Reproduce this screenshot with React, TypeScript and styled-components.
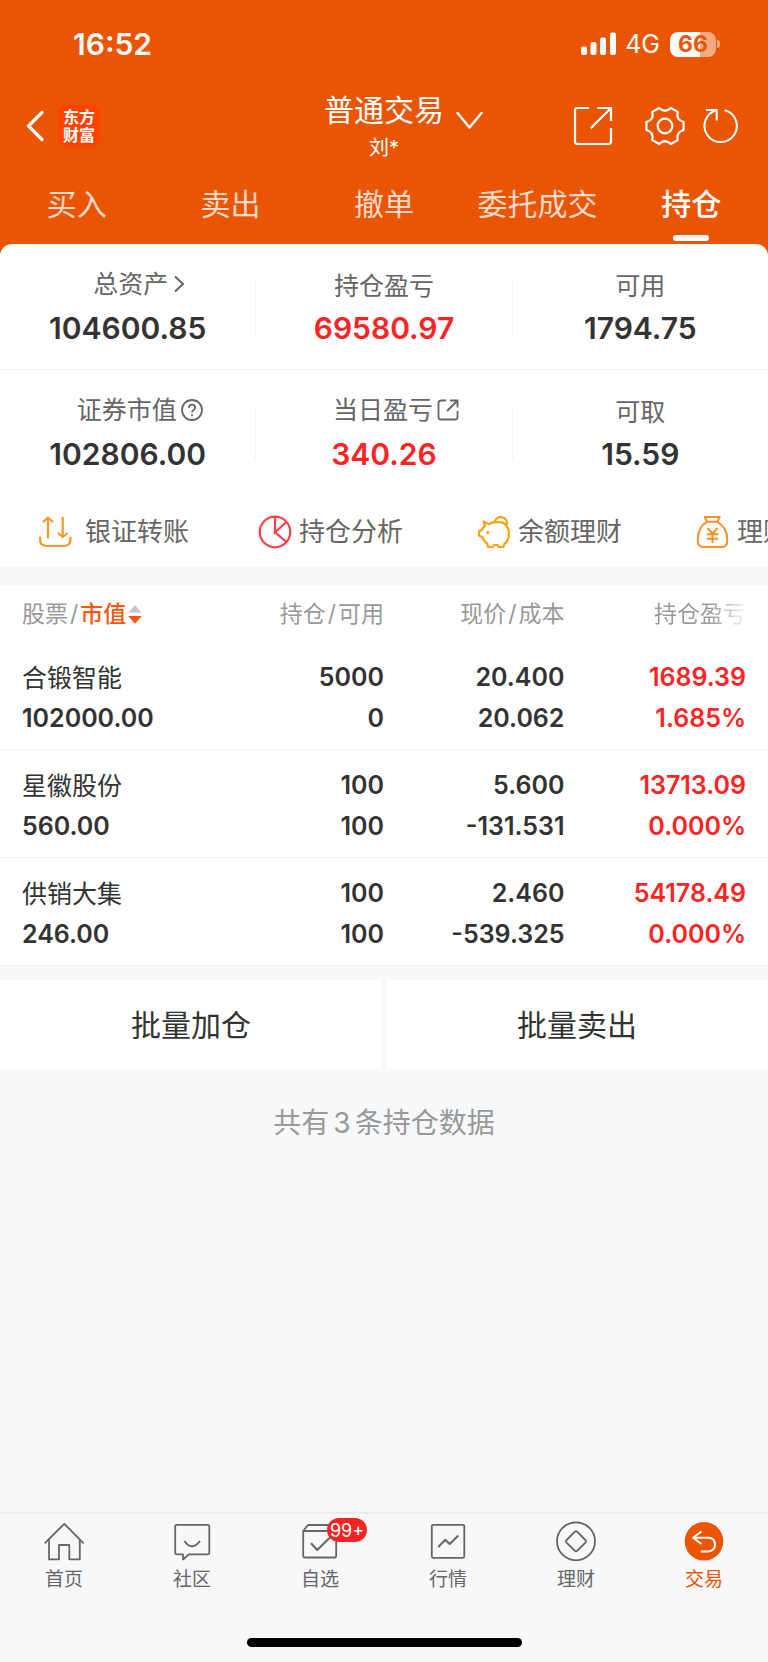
import React from "react";
import styled, { createGlobalStyle } from "styled-components";

const color = {
  brand: "#ea5504",
  accent: "#fb560a",
  page: "#f7f8fa",
  text: "#333333",
  label: "#666666",
  muted: "#999999",
  red: "#fb2424",
  line: "#f4f4f5",
};

const GlobalStyle = createGlobalStyle`
  * { box-sizing: border-box; }
  body {
    margin: 0;
    background: ${color.page};
    color: ${color.text};
    font-family: Inter, "Noto Sans CJK SC", sans-serif;
  }
  button {
    font: inherit;
    color: inherit;
    background: none;
    border: 0;
    padding: 0;
    cursor: pointer;
  }
  a { color: inherit; text-decoration: none; }
  svg { display: block; flex: none; fill: none; }
`;

const Screen = styled.div`
  display: flex;
  flex-direction: column;
  min-height: 100vh;
  background: ${color.page};
`;

/* ---------- header ---------- */

const Header = styled.header`
  background: ${color.brand};
  color: #fff;
`;

const StatusBar = styled.div`
  display: flex;
  justify-content: space-between;
  align-items: center;
  height: 88px;
  padding: 0 48px 0 73px;
`;

const Clock = styled.time`
  font-size: 30px;
  line-height: 36px;
  font-weight: 600;
`;

const StatusIcons = styled.div`
  display: flex;
  align-items: center;
`;

const Network = styled.span`
  margin: 0 10px 0 8px;
  font-size: 25px;
  line-height: 28px;
`;

const Battery = styled.span`
  width: 46px;
  height: 25px;
  border-radius: 8px;
  background: linear-gradient(90deg, #fff 66%, rgba(255, 255, 255, 0.5) 66%);
  color: ${color.brand};
  font-size: 23px;
  line-height: 25px;
  font-weight: 700;
  text-align: center;
`;

const BatteryTip = styled.span`
  width: 3px;
  height: 8px;
  margin-left: 1px;
  border-radius: 0 4px 4px 0;
  background: rgba(255, 255, 255, 0.5);
`;

const NavBar = styled.div`
  display: grid;
  grid-template-columns: 1fr auto 1fr;
  align-items: center;
  height: 73px;
`;

const NavLeft = styled.div`
  display: flex;
  align-items: center;
  gap: 14px;
  padding-left: 26px;
`;

const NavRight = styled.div`
  display: flex;
  align-items: center;
  justify-content: flex-end;
  gap: 18px;
  padding-right: 29px;

  & > :first-child {
    margin-right: 14px;
  }
`;

const Logo = styled.a`
  display: flex;
  flex-direction: column;
  justify-content: center;
  width: 42px;
  height: 42px;
  border-radius: 8px;
  background: #ff4200;
  font-size: 16px;
  line-height: 18px;
  font-weight: 700;
  text-align: center;
`;

const Account = styled.button`
  display: flex;
  flex-direction: column;
  align-items: center;
  gap: 3px;
  padding-top: 3px;
`;

const AccountType = styled.span`
  display: flex;
  align-items: flex-end;
  gap: 12px;
  padding-left: 39px;
  font-size: 30px;
  line-height: 38px;
`;

const AccountName = styled.span`
  font-size: 20px;
  line-height: 32px;
`;

const TradeTabs = styled.nav`
  display: grid;
  grid-template-columns: repeat(5, 1fr);
  height: 83px;
`;

const TradeTab = styled.a<{ $active?: boolean }>`
  display: flex;
  flex-direction: column;
  align-items: center;
  padding-top: 21px;
  font-size: 30px;
  line-height: 44px;
  font-weight: ${(p) => (p.$active ? 500 : 400)};
  color: ${(p) => (p.$active ? "#fff" : "rgba(255, 255, 255, 0.8)")};
  white-space: nowrap;

  &::after {
    content: "";
    width: 36px;
    height: 6px;
    margin-top: 9px;
    border-radius: 3px;
    background: ${(p) => (p.$active ? "#fff" : "transparent")};
  }
`;

/* ---------- account summary ---------- */

const SummaryBackdrop = styled.div`
  background: ${color.brand};
`;

const Summary = styled.section`
  overflow: hidden;
  border-radius: 12px 12px 0 0;
  background: #fff;
`;

const SummaryRow = styled.div<{ $line?: boolean }>`
  display: flex;
  align-items: center;
  height: 126px;
  border-bottom: 1px solid ${(p) => (p.$line ? color.line : "transparent")};
`;

const Divider = styled.i`
  width: 1px;
  height: 54px;
  background: ${color.line};
`;

const Metric = styled.div`
  display: flex;
  flex: 1 1 0;
  flex-direction: column;
  align-items: center;
  padding-top: 8px;
`;

const MetricLabel = styled.span<{ $withIcon?: boolean }>`
  display: flex;
  align-items: center;
  gap: 4px;
  height: 34px;
  padding: ${(p) => (p.$withIcon ? "0 0 4px 24px" : "0")};
  font-size: 25px;
  line-height: 34px;
  color: ${color.label};
`;

const MetricValue = styled.strong<{ $red?: boolean }>`
  font-size: 30px;
  line-height: 50px;
  font-weight: 600;
  color: ${(p) => (p.$red ? color.red : color.text)};
`;

const Shortcuts = styled.div`
  display: flex;
  height: 71px;
  padding-left: 38px;
  overflow: hidden;
`;

const Shortcut = styled.button<{ $wide?: boolean }>`
  display: flex;
  flex: 0 0 ${(p) => (p.$wide ? 220 : 219)}px;
  align-items: center;
  gap: ${(p) => (p.$wide ? 13 : 7)}px;
  font-size: 26px;
  line-height: 36px;
  color: ${color.label};
  white-space: nowrap;
`;

/* ---------- positions ---------- */

const Positions = styled.table`
  width: 100%;
  margin-top: 18px;
  border-spacing: 0;
  table-layout: fixed;
  background: #fff;
`;

const HeadCell = styled.th<{ $fade?: boolean }>`
  width: 23.5%;
  height: 58px;
  padding: 0;
  font-size: 23px;
  line-height: 32px;
  font-weight: 400;
  text-align: right;
  color: ${color.muted};
  white-space: nowrap;

  &:first-child {
    width: 26.5%;
    padding-left: 22px;
    text-align: left;
  }
  &:last-child {
    width: 26.5%;
    padding-right: 22px;
  }

  & > span {
    ${(p) =>
      p.$fade
        ? `background: linear-gradient(90deg, ${color.muted} 60%, #f4f4f4 100%);
           background-clip: text;
           color: transparent;`
        : ""}
  }
`;

const Slash = styled.span`
  margin: 0 2px;
`;

const SortButton = styled.button`
  display: inline-flex;
  align-items: center;
  gap: 2px;
  font-weight: 500;
  color: ${color.accent};
`;

const Cell = styled.td<{ $red?: boolean }>`
  height: 107px;
  padding: 14px 0 10px;
  border-bottom: 1px solid ${color.line};
  font-size: 25px;
  line-height: 41px;
  font-weight: 600;
  text-align: right;
  color: ${(p) => (p.$red ? color.red : color.text)};

  tr + tr > & {
    height: 108px;
    padding-top: 15px;
  }
  &:first-child {
    padding-left: 22px;
    text-align: left;
  }
  &:last-child {
    padding-right: 22px;
  }
`;

const CellLine = styled.div`
  height: 41px;
`;

const StockName = styled(CellLine)`
  font-weight: 400;
  line-height: 43px;
`;

const BatchActions = styled.div`
  display: flex;
  gap: 4px;
  margin-top: 14px;
`;

const BatchButton = styled.button`
  flex: 1;
  height: 89px;
  background: #fff;
  font-size: 30px;
  line-height: 44px;
`;

const CountNote = styled.p`
  flex: 1;
  margin: 0;
  padding-top: 34px;
  font-size: 28px;
  line-height: 40px;
  text-align: center;
  color: ${color.muted};
`;

const Count = styled.span`
  margin: 0 4px;
`;

/* ---------- bottom bar ---------- */

const BottomBar = styled.footer`
  display: flex;
  flex-direction: column;
  align-items: center;
  border-top: 2px solid #ececee;
  background: #f8f8fb;
`;

const BottomTabs = styled.nav`
  display: grid;
  grid-template-columns: repeat(6, 1fr);
  width: 100%;
  padding-top: 7px;
`;

const BottomTab = styled.a<{ $active?: boolean }>`
  display: flex;
  flex-direction: column;
  align-items: center;
  gap: 5px;
  font-size: 19px;
  line-height: 28px;
  color: ${(p) => (p.$active ? color.brand : color.label)};
`;

const IconSlot = styled.span`
  position: relative;
`;

const Badge = styled.span`
  position: absolute;
  top: -3px;
  left: 27px;
  width: 40px;
  height: 24px;
  border-radius: 12px;
  background: #f52323;
  color: #fff;
  font-size: 18px;
  line-height: 25px;
  text-align: center;
`;

const HomeIndicator = styled.div`
  width: 275px;
  height: 9px;
  margin: 44px 0 15px;
  border-radius: 5px;
  background: #000;
`;

/* ---------- icons ---------- */

const polar = (r: number, deg: number) => {
  const a = (deg * Math.PI) / 180;
  return `${(20 + r * Math.cos(a)).toFixed(2)} ${(20 + r * Math.sin(a)).toFixed(2)}`;
};

/* Six flat lobes joined by shallow curved dips. */
const gearPath =
  [0, 60, 120, 180, 240, 300]
    .map((a, i) => `${i ? "" : "M" + polar(19, a - 12)}L${polar(19, a + 12)}Q${polar(12.4, a + 30)} ${polar(19, a + 48)}`)
    .join("") + "Z";

const GearIcon = () => (
  <svg width="40" height="40" stroke="#fff" strokeWidth="2.2" strokeLinejoin="round">
    <path d={gearPath} />
    <circle cx="20" cy="20" r="7.3" />
  </svg>
);

const BackIcon = () => (
  <svg width="18" height="32" stroke="#fff" strokeWidth="3.2" strokeLinecap="round" strokeLinejoin="round">
    <path d="M16 2.500 2.500 16 16 29.500" />
  </svg>
);

const CaretIcon = () => (
  <svg width="27" height="18" stroke="#fff" strokeWidth="2.4" strokeLinecap="round" strokeLinejoin="round">
    <path d="M1.500 2 13.500 16.500 25.500 2" />
  </svg>
);

const OpenIcon = () => (
  <svg width="40" height="40" stroke="#fff" strokeWidth="2.2">
    <path d="M16 2H4.500Q2 2 2 4.500V35.500Q2 38 4.500 38H35.500Q38 38 38 35.500V22M24.300 2H38V15M38 2 17.700 22.300" />
  </svg>
);

const RefreshIcon = () => (
  <svg width="36" height="36" stroke="#fff" strokeWidth="2">
    <path d="M21.700 2.200A16.200 16.200 0 1 1 13.300 2.300M3 1.900H13.700V12.500" />
  </svg>
);

const SignalIcon = () => (
  <svg width="36" height="24" style={{ fill: "#fff" }}>
    <rect x="0" y="14.500" width="6" height="8.500" rx="2" />
    <rect x="9.500" y="10" width="6" height="13" rx="2" />
    <rect x="19" y="5.500" width="6" height="17.500" rx="2" />
    <rect x="29" y="0.500" width="6" height="22.500" rx="2" />
  </svg>
);

const ChevronIcon = () => (
  <svg width="14" height="20" stroke={color.label} strokeWidth="2">
    <path d="M3 2.500 11 10 3 17.500" />
  </svg>
);

const HelpIcon = () => (
  <svg width="22" height="22" stroke={color.label} strokeWidth="1.8">
    <circle cx="11" cy="11" r="10" />
    <path d="M7.800 8.700Q8 5.700 11 5.700T14.200 8.500Q14.200 10 12.600 11T11 13.600M11 15.300V17.300" />
  </svg>
);

const DetailIcon = () => (
  <svg width="22" height="22" stroke={color.label} strokeWidth="1.8">
    <path d="M9 1.500H4Q1.500 1.500 1.500 4V18Q1.500 20.500 4 20.500H18Q20.500 20.500 20.500 18V12M13 1.500H20.500V8.500M20.500 1.500 10 12" />
  </svg>
);

const SortIcon = () => (
  <svg width="14" height="22">
    <path d="M7 2 13.800 9.800H.2Z" fill="#c8c8c8" />
    <path d="M7 20.800.2 13H13.800Z" fill={color.accent} />
  </svg>
);

const TransferIcon = () => (
  <svg width="34" height="34" stroke="#f79a27" strokeWidth="2.200" strokeLinecap="round" strokeLinejoin="round">
    <path d="M2 22.500V24Q2 31 9 31H25.500Q32.500 31 32.500 24V22.500M10 22.500V2.500M5.700 6.500 10 2.500 14.300 6.500M24.700 2.500V22M20.500 18.500 24.700 22 29 18.500" />
  </svg>
);

const PieIcon = () => (
  <svg width="34" height="34" stroke="#ff4048" strokeWidth="2.200">
    <circle cx="17" cy="17" r="15.300" />
    <path d="M17 1.700V17.300L28.500 7M17 17.300 28.500 27" />
  </svg>
);

const PiggyIcon = () => (
  <svg width="34" height="34" stroke="#f8a20c" strokeWidth="2.200" strokeLinejoin="round">
    <path d="M6.500 6.500 12 9.200C14 7.800 16 7.200 18 7.200H23C29 7.800 32 13 32 18.500C32 23.500 30 27 27.300 29L26.500 32H21.500L20.800 30H16.700L16 32H11L10 28.500C8 27 6.500 25 5.500 22.300L2 20.500V16.500L5 15C5.500 13 6.500 12 8 11Z" />
    <path d="M17.500 7.200A6.300 6.300 0 0 1 30 9.800" />
    <circle cx="10.800" cy="17.500" r="1.600" fill="#f8a20c" stroke="none" />
  </svg>
);

const MoneyBagIcon = () => (
  <svg width="34" height="34" stroke="#f8912a" strokeWidth="2" strokeLinejoin="round">
    <path d="M11 6.800 8.700 2H23.700L21.300 6.800ZM11 6.800C5 10 1.700 16.500 1.700 25Q1.700 32 7 32H26Q31.300 32 31.300 25C31.300 16.500 27 10 21.300 6.800" />
    <path d="M11.500 13 16.500 18.500 21.500 13M16.500 18.500V28M10.700 19.300H22.300M10.700 23.700H22.300" />
  </svg>
);

const tabIconProps = { width: 40, height: 40, stroke: color.label, strokeWidth: 1.8, strokeLinejoin: "round" as const };

const HomeIcon = () => (
  <svg {...tabIconProps}>
    <path d="M.7 22.300 20.300 2.800 39.600 22.300M5 18.500V38.300H15V24H25.300V38.300H35.800V18.500" />
  </svg>
);

const CommunityIcon = () => (
  <svg {...tabIconProps}>
    <path d="M5 3.800H35.500Q37.300 3.800 37.300 5.500V31.500Q37.300 33.300 35.500 33.300H17L11 38.500V33.300H5Q3.200 33.300 3.200 31.500V5.500Q3.200 3.800 5 3.800Z" />
    <path d="M12.300 20Q20 30.500 28 20" strokeWidth="2" />
  </svg>
);

const WatchlistIcon = () => (
  <svg {...tabIconProps}>
    <path d="M3.200 10 8 4H32L36.200 10M3.200 10H36.200V34.500Q36.200 36.500 34.500 36.500H5Q3.200 36.500 3.200 34.500Z" />
    <path d="M11 22.300 17.200 29 30 16.500" strokeWidth="2" />
  </svg>
);

const QuotesIcon = () => (
  <svg {...tabIconProps}>
    <rect x="3.800" y="3.800" width="32.500" height="33" rx="1.500" />
    <path d="M10.300 26 17.300 18.700 21.700 23 30.300 14.500" strokeWidth="2" />
  </svg>
);

const WealthIcon = () => (
  <svg {...tabIconProps}>
    <circle cx="20" cy="20.300" r="19" />
    <path d="M18.700 10.900Q20 9.600 21.300 10.900L29.400 19Q30.700 20.300 29.400 21.600L21.300 29.700Q20 31 18.700 29.700L10.600 21.600Q9.300 20.300 10.600 19Z" />
  </svg>
);

const TradeIcon = () => (
  <svg {...tabIconProps} stroke="#fff" strokeWidth={2}>
    <circle cx="20" cy="20.300" r="19.300" fill={color.brand} stroke="none" />
    <path d="M17.500 10.500 9 16.700 17.500 23M9 16.700H24Q31 17 31 23.500T24 30.500H16.700" />
  </svg>
);

/* ---------- data ---------- */

const tradeTabs = ["买入", "卖出", "撤单", "委托成交", "持仓"];

type MetricData = { label: string; value: string; red?: boolean; icon?: React.ReactNode };

const metrics: MetricData[][] = [
  [
    { label: "总资产", value: "104600.85", icon: <ChevronIcon /> },
    { label: "持仓盈亏", value: "69580.97", red: true },
    { label: "可用", value: "1794.75" },
  ],
  [
    { label: "证券市值", value: "102806.00", icon: <HelpIcon /> },
    { label: "当日盈亏", value: "340.26", red: true, icon: <DetailIcon /> },
    { label: "可取", value: "15.59" },
  ],
];

const shortcuts = [
  { label: "银证转账", icon: <TransferIcon /> },
  { label: "持仓分析", icon: <PieIcon /> },
  { label: "余额理财", icon: <PiggyIcon /> },
  { label: "理财", icon: <MoneyBagIcon /> },
];

const positions = [
  { name: "合锻智能", value: "102000.00", held: "5000", free: "0", price: "20.400", cost: "20.062", profit: "1689.39", rate: "1.685%" },
  { name: "星徽股份", value: "560.00", held: "100", free: "100", price: "5.600", cost: "-131.531", profit: "13713.09", rate: "0.000%" },
  { name: "供销大集", value: "246.00", held: "100", free: "100", price: "2.460", cost: "-539.325", profit: "54178.49", rate: "0.000%" },
];

const bottomTabs = [
  { label: "首页", icon: <HomeIcon /> },
  { label: "社区", icon: <CommunityIcon /> },
  { label: "自选", icon: <WatchlistIcon />, badge: "99+" },
  { label: "行情", icon: <QuotesIcon /> },
  { label: "理财", icon: <WealthIcon /> },
  { label: "交易", icon: <TradeIcon />, active: true },
];

export default function App() {
  return (
    <Screen lang="zh-CN">
      <GlobalStyle />
      <Header>
        <StatusBar>
          <Clock>16:52</Clock>
          <StatusIcons>
            <SignalIcon />
            <Network>4G</Network>
            <Battery>66</Battery>
            <BatteryTip />
          </StatusIcons>
        </StatusBar>
        <NavBar>
          <NavLeft>
            <button aria-label="返回">
              <BackIcon />
            </button>
            <Logo href="#">
              <span>东方</span>
              <span>财富</span>
            </Logo>
          </NavLeft>
          <Account>
            <AccountType>
              普通交易
              <CaretIcon />
            </AccountType>
            <AccountName>刘*</AccountName>
          </Account>
          <NavRight>
            <button aria-label="打开">
              <OpenIcon />
            </button>
            <button aria-label="设置">
              <GearIcon />
            </button>
            <button aria-label="刷新">
              <RefreshIcon />
            </button>
          </NavRight>
        </NavBar>
        <TradeTabs>
          {tradeTabs.map((tab) => (
            <TradeTab key={tab} href="#" $active={tab === "持仓"}>
              {tab}
            </TradeTab>
          ))}
        </TradeTabs>
      </Header>

      <SummaryBackdrop>
        <Summary>
          {metrics.map((row, i) => (
            <SummaryRow key={i} $line={i === 0}>
              {row.map((m, j) => (
                <React.Fragment key={m.label}>
                  {j > 0 && <Divider />}
                  <Metric>
                    <MetricLabel $withIcon={Boolean(m.icon)}>
                      {m.label}
                      {m.icon}
                    </MetricLabel>
                    <MetricValue $red={m.red}>{m.value}</MetricValue>
                  </Metric>
                </React.Fragment>
              ))}
            </SummaryRow>
          ))}
          <Shortcuts>
            {shortcuts.map((s, i) => (
              <Shortcut key={s.label} $wide={i === 0}>
                {s.icon}
                {s.label}
              </Shortcut>
            ))}
          </Shortcuts>
        </Summary>
      </SummaryBackdrop>

      <Positions>
        <thead>
          <tr>
            <HeadCell>
              股票<Slash>/</Slash>
              <SortButton>
                市值
                <SortIcon />
              </SortButton>
            </HeadCell>
            <HeadCell>
              持仓<Slash>/</Slash>可用
            </HeadCell>
            <HeadCell>
              现价<Slash>/</Slash>成本
            </HeadCell>
            <HeadCell $fade>
              <span>持仓盈亏</span>
            </HeadCell>
          </tr>
        </thead>
        <tbody>
          {positions.map((p) => (
            <tr key={p.name}>
              <Cell>
                <StockName>{p.name}</StockName>
                <CellLine>{p.value}</CellLine>
              </Cell>
              <Cell>
                <CellLine>{p.held}</CellLine>
                <CellLine>{p.free}</CellLine>
              </Cell>
              <Cell>
                <CellLine>{p.price}</CellLine>
                <CellLine>{p.cost}</CellLine>
              </Cell>
              <Cell $red>
                <CellLine>{p.profit}</CellLine>
                <CellLine>{p.rate}</CellLine>
              </Cell>
            </tr>
          ))}
        </tbody>
      </Positions>

      <BatchActions>
        <BatchButton>批量加仓</BatchButton>
        <BatchButton>批量卖出</BatchButton>
      </BatchActions>
      <CountNote>
        共有<Count>3</Count>条持仓数据
      </CountNote>

      <BottomBar>
        <BottomTabs>
          {bottomTabs.map((t) => (
            <BottomTab key={t.label} href="#" $active={t.active}>
              <IconSlot>
                {t.icon}
                {t.badge && <Badge>{t.badge}</Badge>}
              </IconSlot>
              {t.label}
            </BottomTab>
          ))}
        </BottomTabs>
        <HomeIndicator />
      </BottomBar>
    </Screen>
  );
}
